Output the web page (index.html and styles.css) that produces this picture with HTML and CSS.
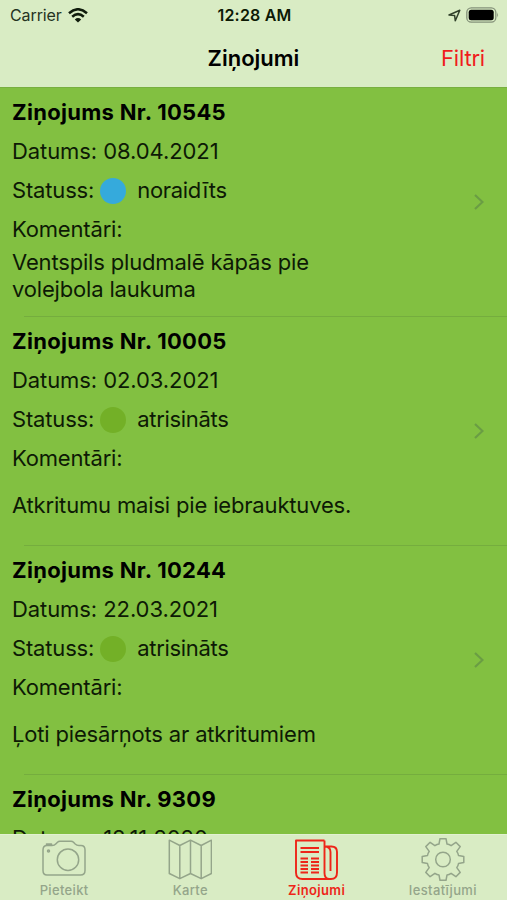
FILE: index.html
```html
<!DOCTYPE html>
<html lang="lv">
  <head>
    <meta charset="UTF-8" />
    <meta name="viewport" content="width=device-width, initial-scale=1.0" />
    <title>Ziņojumi</title>
    <link rel="stylesheet" href="styles.css">
  </head>
  <body>
    <header>
      <div class="status-bar">
        <div class="carrier">
          <span>Carrier</span>
          <svg width="20" height="15" viewBox="0 0 20 15" fill="none" stroke="#101c0c" stroke-width="2.5">
            <path d="M1 5.2Q10-2.7 19 5.2" />
            <path d="M4.2 8.7Q10 3.6 15.8 8.7" />
            <path d="M6.8 11.4Q10 8.5 13.2 11.4L10 14.5Z" fill="#101c0c" stroke="none" />
          </svg>
        </div>
        <div class="clock">12:28 AM</div>
        <div class="indicators">
          <svg width="13" height="13" viewBox="0 0 13 13" fill="none" stroke="#30402a" stroke-width="1.5" stroke-linejoin="round">
            <path d="M1 6L11.8 1.2L7.3 11.8L6.6 6.4Z" />
          </svg>
          <svg width="33" height="16" viewBox="0 0 33 16">
            <rect x=".8" y=".8" width="29" height="14.4" rx="4.5" fill="none" stroke="#849179" stroke-width="1.3" />
            <rect x="2.7" y="2.8" width="25" height="10.4" rx="2.5" fill="#000" />
            <path d="M31.2 5.5Q33 8 31.2 10.5Z" fill="#849179" />
          </svg>
        </div>
      </div>
      <div class="nav-bar">
        <h1>Ziņojumi</h1>
        <a class="filter">Filtri</a>
      </div>
    </header>

    <main class="reports">
      <article class="report">
        <h2>Ziņojums Nr. 10545</h2>
        <p class="date">Datums: 08.04.2021</p>
        <p class="status">Statuss:<span class="dot rejected"></span><span class="value">noraidīts</span></p>
        <p class="label">Komentāri:</p>
        <p class="comment">Ventspils pludmalē kāpās pie<br>volejbola laukuma</p>
        <svg class="chevron" viewBox="0 0 10 16"><path d="M1 1L8.5 8L1 15" /></svg>
      </article>
      <article class="report">
        <h2>Ziņojums Nr. 10005</h2>
        <p class="date">Datums: 02.03.2021</p>
        <p class="status">Statuss:<span class="dot solved"></span><span class="value">atrisināts</span></p>
        <p class="label">Komentāri:</p>
        <p class="comment">Atkritumu maisi pie iebrauktuves.</p>
        <svg class="chevron" viewBox="0 0 10 16"><path d="M1 1L8.5 8L1 15" /></svg>
      </article>
      <article class="report">
        <h2>Ziņojums Nr. 10244</h2>
        <p class="date">Datums: 22.03.2021</p>
        <p class="status">Statuss:<span class="dot solved"></span><span class="value">atrisināts</span></p>
        <p class="label">Komentāri:</p>
        <p class="comment">Ļoti piesārņots ar atkritumiem</p>
        <svg class="chevron" viewBox="0 0 10 16"><path d="M1 1L8.5 8L1 15" /></svg>
      </article>
      <article class="report">
        <h2>Ziņojums Nr. 9309</h2>
        <p class="date">Datums: 18.11.2020</p>
      </article>
    </main>

    <nav class="tabs">
      <a class="tab">
        <svg viewBox="0 0 44 44">
          <path d="M5 7.5H10Q12.5 7.5 14 5.7L15.5 4.2Q16.5 3.2 18 3.2H29Q30.5 3.2 31.5 4.2L33.2 6Q34.7 7.5 37 7.5H39Q43 7.5 43 12V32.5Q43 37 38.5 37H5Q1 37 1 32.5V12Q1 7.5 5 7.5ZM4.5 7.5V6H9.5V7.5" />
          <circle cx="26" cy="21.7" r="10.7" />
          <circle cx="6.5" cy="13" r="1" />
        </svg>
        <span>Pieteikt</span>
      </a>
      <a class="tab">
        <svg viewBox="0 0 44 44">
          <path d="M1.3 2.2L11.8 7.5L22.5 2.2L33.2 7.5L43.4 2.2V35.5L33.2 40.7L22.5 35.5L11.8 40.7L1.3 35.5ZM11.8 7.5V40.7M22.5 2.2V35.5M33.2 7.5V40.7" />
        </svg>
        <span>Karte</span>
      </a>
      <a class="tab active">
        <svg viewBox="0 0 44 44">
          <path d="M29.5 2.5H1V34.5Q1 41 7.5 41H36Q42 41 42 34.5V14Q42 8.5 36.5 8.5H29.5M29.5 2.5V35Q29.5 41 34.5 41M29.5 8.5Q35.5 8.5 35.5 14V33" />
          <path d="M5.5 10H24M5.5 14H24M5.5 20.5H13M5.5 24H13M5.5 27.5H13M5.5 31H13M5.5 34.5H13M16 20.5H24M16 24H24M16 27.5H24M16 31H24M16 34.5H24" />
        </svg>
        <span>Ziņojumi</span>
      </a>
      <a class="tab">
        <svg viewBox="0 0 44 44">
          <g transform="translate(22 21.5)">
            <path d="M-3-20.8H3L4-15.5Q6-15.3 8.1-13.8L12.9-17.2L17.2-12.9L13.8-8.1Q15.3-6 15.5-4L20.8-3V3L15.5 4Q15.3 6 13.8 8.1L17.2 12.9L12.9 17.2L8.1 13.8Q6 15.3 4 15.5L3 20.8H-3L-4 15.5Q-6 15.3-8.1 13.8L-12.9 17.2L-17.2 12.9L-13.8 8.1Q-15.3 6-15.5 4L-20.8 3V-3L-15.5-4Q-15.3-6-13.8-8.1L-17.2-12.9L-12.9-17.2L-8.1-13.8Q-6-15.3-4-15.5Z" />
            <circle r="7.3" />
          </g>
        </svg>
        <span>Iestatījumi</span>
      </a>
    </nav>
  </body>
</html>
```
FILE: styles.css
```css
* {
  box-sizing: border-box;
}
body {
  margin: 0;
  height: 100vh;
  display: flex;
  flex-direction: column;
  overflow: hidden;
  background-color: #82c041;
  color: #0d1a05;
  font-family: Inter, "Liberation Sans", sans-serif;
}
h1,
h2,
p {
  margin: 0;
}
header {
  height: 87px;
  flex: none;
  background-color: #d9ecc4;
}
.status-bar {
  height: 30px;
  padding: 0 8px 0 10px;
  display: grid;
  grid-template-columns: 1fr auto 1fr;
  align-items: center;
  font-size: 16px;
}
.carrier {
  display: flex;
  align-items: center;
  gap: 6px;
  color: #26331f;
  letter-spacing: -0.1px;
}
.clock {
  font-weight: 600;
  letter-spacing: 0.2px;
}
.indicators {
  display: flex;
  align-items: center;
  justify-content: flex-end;
  gap: 5px;
}
.nav-bar {
  height: 55px;
  padding: 0 22px;
  display: grid;
  grid-template-columns: 1fr auto 1fr;
  align-items: center;
}
.nav-bar h1 {
  grid-column: 2;
  font-size: 22px;
  font-weight: 600;
  color: #000;
}
.filter {
  justify-self: end;
  font-size: 22px;
  letter-spacing: -0.2px;
  color: #f01c1c;
}
.reports {
  flex: 1;
  min-height: 0;
  overflow: hidden;
  border-top: 1px solid #78af40;
}
.report {
  height: 229px;
  padding: 5px 22px 13px 12px;
  display: grid;
  grid-template-columns: 1fr 12px;
  grid-template-rows: repeat(4, 39px) 54px;
  align-items: center;
  font-size: 22px;
  letter-spacing: -0.17px;
  line-height: 27px;
  white-space: nowrap;
  background: linear-gradient(#75ad3e, #75ad3e) 24px 100% / 100% 1px no-repeat;
}
.report > * {
  grid-column: 1;
}
.report h2 {
  font-size: 22px;
  font-weight: 700;
  letter-spacing: 0.3px;
  color: #000;
}
.date {
  letter-spacing: -0.08px;
}
.status {
  display: flex;
  align-items: center;
}
.value {
  letter-spacing: -0.3px;
}
.dot {
  width: 26px;
  height: 26px;
  margin: 0 11px 0 6px;
  border-radius: 50%;
}
.rejected {
  background-color: #35aadc;
}
.solved {
  background-color: #73b027;
}
.report .chevron {
  grid-column: 2;
  grid-row: 1 / -1;
  width: 10px;
  height: 16px;
  margin: 7px 0 0 1px;
  fill: none;
  stroke: #6a9d44;
  stroke-width: 2.2;
}
.tabs {
  height: 66px;
  flex: none;
  padding: 0 1px;
  display: grid;
  grid-template-columns: repeat(4, 1fr);
  background-color: #d9ecc4;
  border-top: 1px solid #e2f1d1;
}
.tab {
  display: flex;
  flex-direction: column;
  align-items: center;
  padding-top: 3px;
  color: #94a58a;
  font-size: 13px;
  font-weight: 500;
  letter-spacing: 0.35px;
  line-height: 16px;
}
.tab svg {
  width: 44px;
  height: 44px;
  fill: none;
  stroke: currentColor;
  stroke-width: 1.5;
  stroke-linejoin: round;
}
.tab.active {
  color: #ee2518;
  font-weight: 600;
}
.tab.active svg {
  stroke-width: 1.9;
}
```
